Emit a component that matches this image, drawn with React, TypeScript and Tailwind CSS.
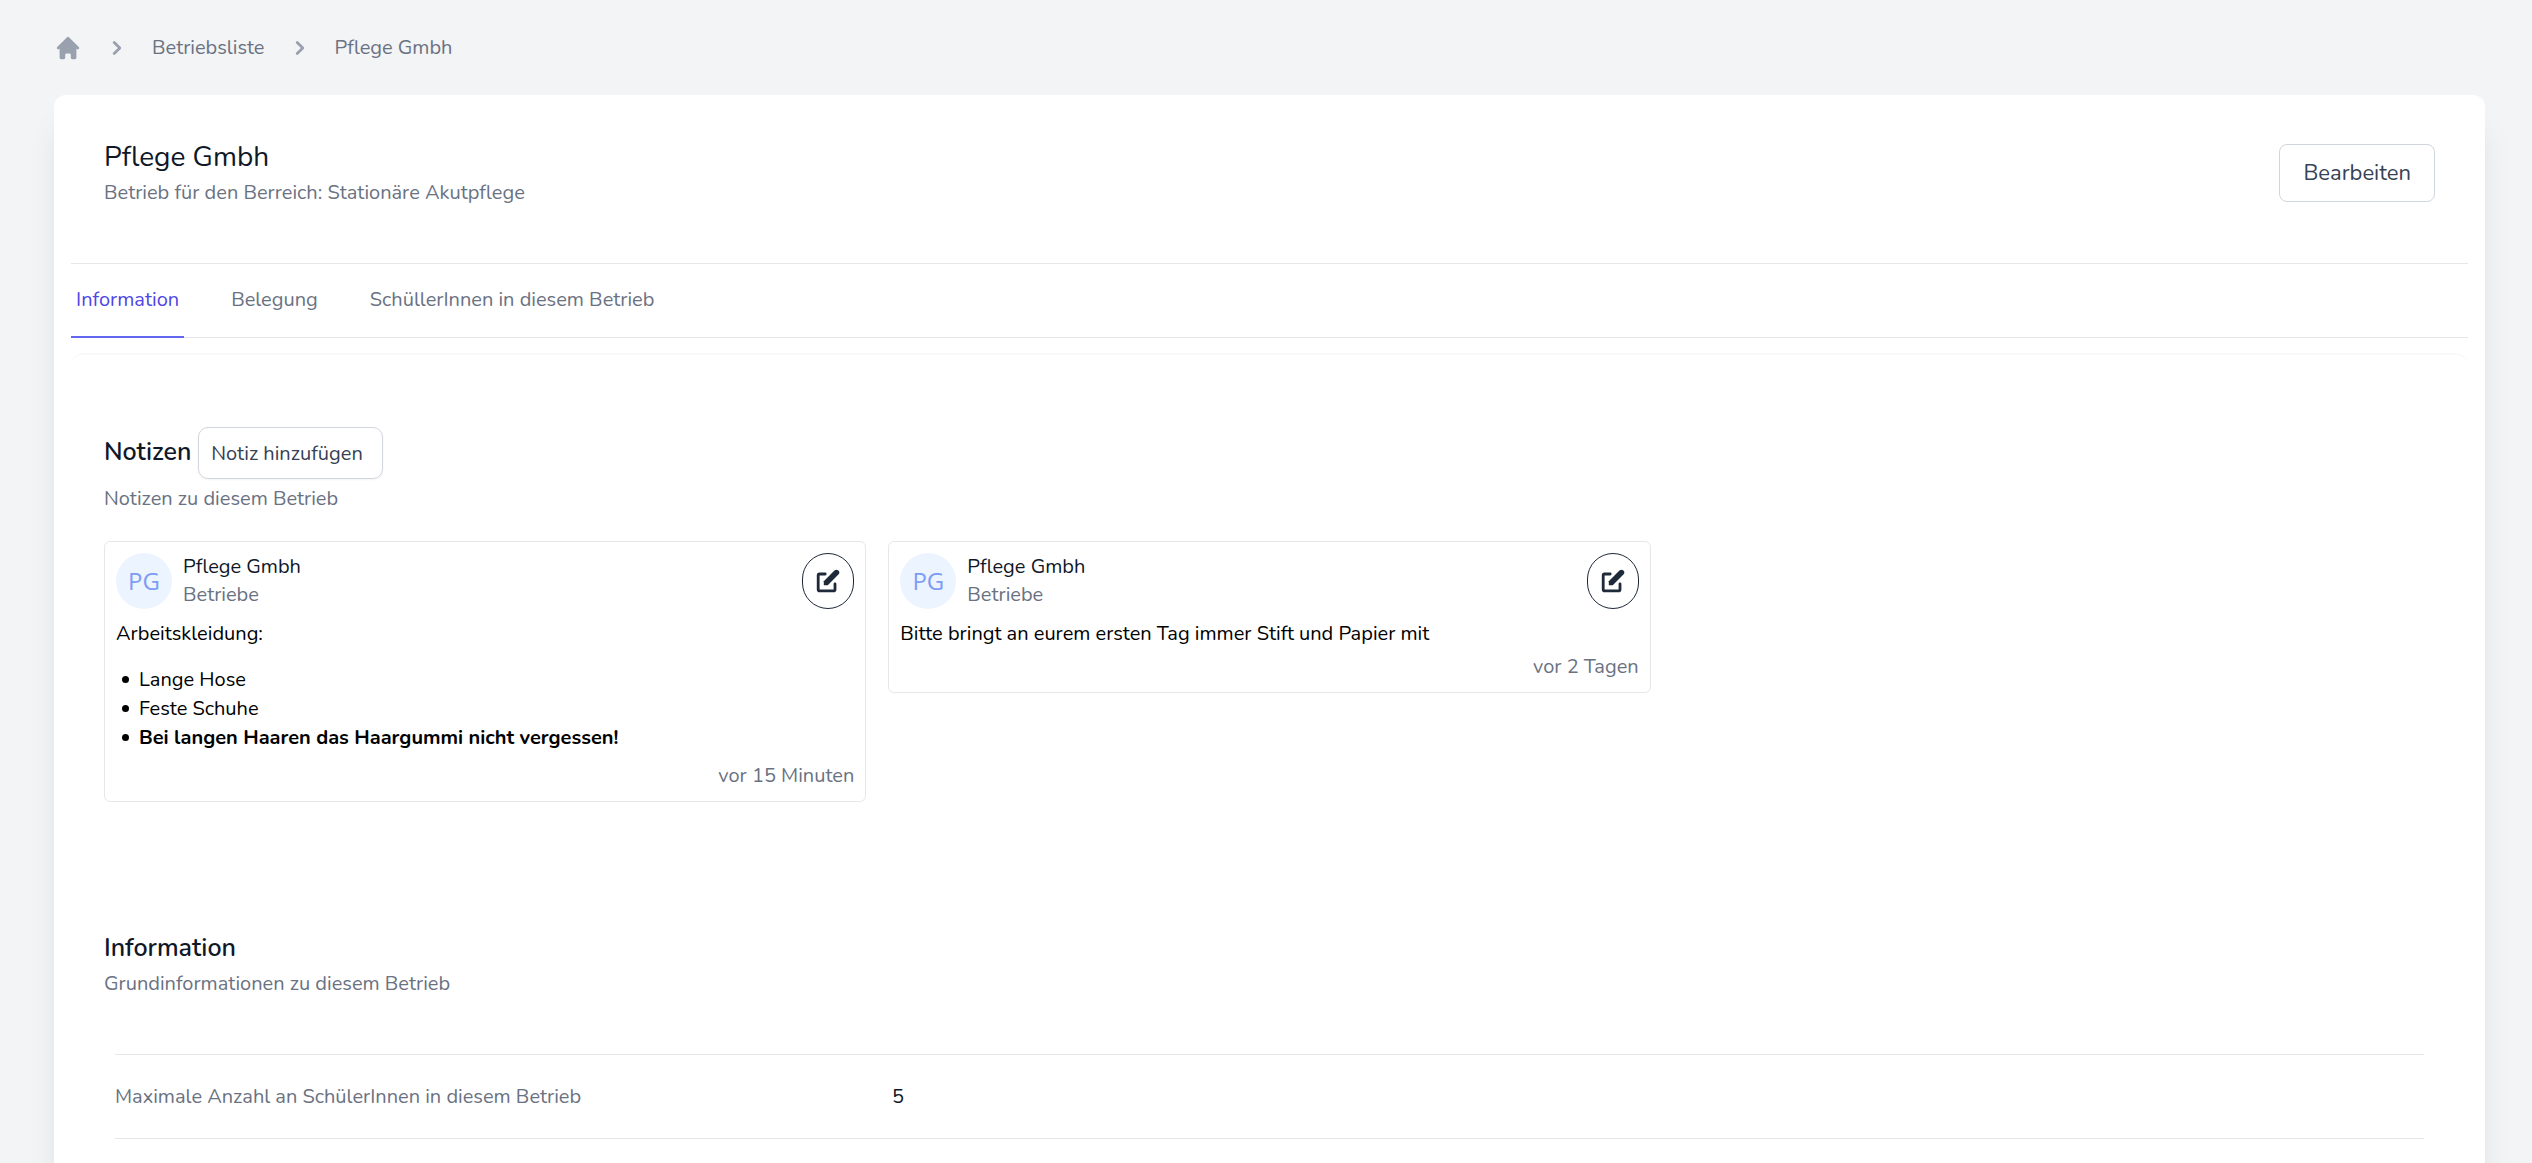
import React from 'react';
import { HiChevronRight, HiHome, HiPencilAlt } from 'react-icons/hi';

interface NoteCardProps {
  author: string;
  role: string;
  initials: string;
  time: string;
  children: React.ReactNode;
}

const tabs = ['Information', 'Belegung', 'SchüllerInnen in diesem Betrieb'];

const crumbs = ['Betriebsliste', 'Pflege Gmbh'];

const bulletItem =
  'flex items-center gap-[10px] before:size-[7px] before:shrink-0 before:rounded-full before:bg-black';

function Breadcrumb() {
  return (
    <nav aria-label="Breadcrumb" className="pt-[34px] pb-[33px]">
      <ol className="flex items-center gap-[21px]">
        <li>
          <a href="#" aria-label="Home" className="block text-gray-400">
            <HiHome size={28} />
          </a>
        </li>
        {crumbs.map((crumb) => (
          <li key={crumb} className="flex items-center gap-[21px]">
            <HiChevronRight size={28} className="text-gray-400" />
            <a href="#" className="text-gray-500">{crumb}</a>
          </li>
        ))}
      </ol>
    </nav>
  );
}

function NoteCard({ author, role, initials, time, children }: NoteCardProps) {
  return (
    <article className="rounded-md border border-gray-200 p-[11px]">
      <div className="flex">
        <div className="flex size-14 items-center justify-center rounded-full bg-[#ebf4ff] font-['Open_Sans',sans-serif] text-2xl text-[#7f9cf5]">
          {initials}
        </div>
        <div className="ml-[11px] flex-1">
          <p className="text-gray-900">{author}</p>
          <p className="text-gray-500">{role}</p>
        </div>
        <button
          type="button"
          aria-label="Notiz bearbeiten"
          className="flex items-center rounded-full border border-gray-800 px-[11px] text-gray-800"
        >
          <HiPencilAlt size={28} />
        </button>
      </div>
      <div className="mt-[10px] leading-[29px] text-black">{children}</div>
      <p className="mt-[5px] text-right text-gray-500">{time}</p>
    </article>
  );
}

export default function App() {
  return (
    <div className="h-screen overflow-hidden bg-gray-100 pr-[47px] pl-[54px] font-['Nunito','Lato',sans-serif] text-xl">
      <Breadcrumb />

      <main className="rounded-xl bg-white px-[17px] pb-12 shadow-[0_28px_35px_-7px_rgba(0,0,0,0.1),0_14px_14px_-7px_rgba(0,0,0,0.04)]">
        <header className="flex items-start justify-between px-[33px] pt-[45px] pb-[56px]">
          <div>
            <h1 className="text-[28px] leading-[34px] text-gray-900">Pflege Gmbh</h1>
            <p className="mt-[5px] text-gray-500">Betrieb für den Berreich: Stationäre Akutpflege</p>
          </div>
          <button
            type="button"
            className="mt-1 rounded-lg border border-gray-300 px-[23px] py-[14px] text-[22px] leading-7 text-gray-700"
          >
            Bearbeiten
          </button>
        </header>

        <nav aria-label="Tabs" className="flex gap-[42px] border-y border-gray-200">
          {tabs.map((tab, i) => (
            <a
              key={tab}
              href="#"
              className={
                i === 0
                  ? '-mb-px border-b-2 border-[#6366f1] px-[5px] pt-[22px] pb-[22px] text-[#4f46e5]'
                  : '-mb-px border-b-2 border-transparent px-[5px] pt-[22px] pb-[22px] text-gray-500'
              }
            >
              {tab}
            </a>
          ))}
        </nav>

        <div className="mt-[15px] rounded-xl border-t-2 border-[#f9f9f9] px-[33px] pt-[72px] pb-8">
          <section>
            <div className="flex items-baseline gap-[7px]">
              <h2 className="text-[25px] leading-[30px] font-semibold text-gray-900">Notizen</h2>
              <button
                type="button"
                className="rounded-[10px] border border-gray-300 pt-3 pr-[19px] pb-[10px] pl-3 text-gray-700 shadow-xs"
              >
                Notiz hinzufügen
              </button>
            </div>
            <p className="mt-[6px] text-gray-500">Notizen zu diesem Betrieb</p>

            <div className="mt-7 grid grid-cols-3 items-start gap-[22px]">
              <NoteCard author="Pflege Gmbh" role="Betriebe" initials="PG" time="vor 15 Minuten">
                <p>Arbeitskleidung:</p>
                <ul className="mt-[17px] mb-[10px] pl-[6px]">
                  <li className={bulletItem}>Lange Hose</li>
                  <li className={bulletItem}>Feste Schuhe</li>
                  <li className={bulletItem}>
                    <strong className="font-bold">Bei langen Haaren das Haargummi nicht vergessen!</strong>
                  </li>
                </ul>
              </NoteCard>
              <NoteCard author="Pflege Gmbh" role="Betriebe" initials="PG" time="vor 2 Tagen">
                <p>Bitte bringt an eurem ersten Tag immer Stift und Papier mit</p>
              </NoteCard>
            </div>
          </section>

          <section className="mt-[131px]">
            <h2 className="text-[25px] leading-[30px] font-semibold text-gray-900">Information</h2>
            <p className="mt-[7px] text-gray-500">Grundinformationen zu diesem Betrieb</p>

            <dl className="mx-[11px] mt-14 border-y border-gray-200">
              <div className="grid grid-cols-3 gap-[22px] pt-7 pb-[27px]">
                <dt className="text-gray-500">Maximale Anzahl an SchülerInnen in diesem Betrieb</dt>
                <dd className="text-gray-900">5</dd>
              </div>
            </dl>
          </section>
        </div>
      </main>
    </div>
  );
}
